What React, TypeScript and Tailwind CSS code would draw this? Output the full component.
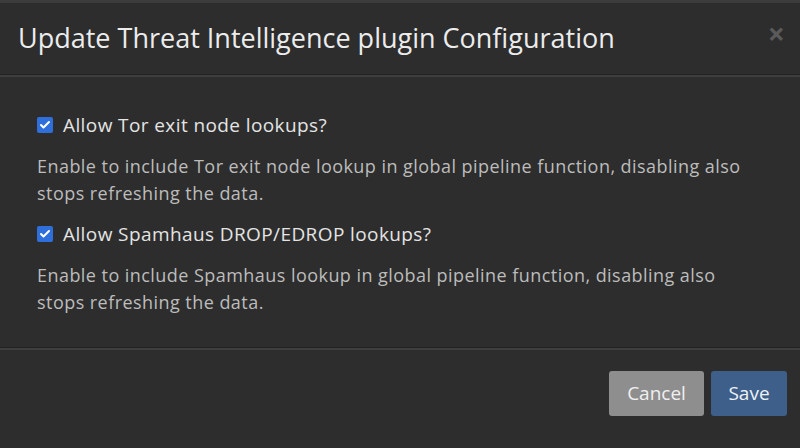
import {Check} from "lucide-react";

function Option({label, help}: {label: string, help: string}) {
    return (
        <div className="flex flex-col">
            <label className="flex items-center gap-[10px] text-[19px] leading-[24px] tracking-[0.4px] text-[#e4e4e4]">
                <span className="flex h-[16px] w-[16px] items-center justify-center rounded-[2px] bg-[#2f6fdc]">
                    <Check className="size-[12px] text-white" strokeWidth={4}/>
                </span>
                {label}
            </label>
            <p className="mt-[16px] text-[18px] leading-[27px] tracking-[0.45px] text-[#bcbcbc]">{help}</p>
        </div>
    )
}

export default function App() {
    return (
        <div className="flex h-[448px] w-[800px] flex-col bg-[#2d2d2d] font-['Open_Sans',sans-serif]">
            <div className="h-[3px] bg-[#3c3c3c]"/>
            <div className="flex h-[71px] items-center justify-between pl-[18px] pr-[15px]">
                <h1 className="text-[27px] text-[#ececec]">Update Threat Intelligence plugin Configuration</h1>
                <span className="mb-[10px] text-[30px] font-bold leading-none text-[#5a5a5a]">×</span>
            </div>
            <div className="h-[1px] bg-[#222]"/>
            <div className="h-[2px] bg-[#3e3e3e]"/>
            <div className="flex flex-1 flex-col gap-[15px] px-[37px] pt-[36px]">
                <Option label="Allow Tor exit node lookups?"
                        help="Enable to include Tor exit node lookup in global pipeline function, disabling also stops refreshing the data."/>
                <Option label="Allow Spamhaus DROP/EDROP lookups?"
                        help="Enable to include Spamhaus lookup in global pipeline function, disabling also stops refreshing the data."/>
            </div>
            <div className="h-[1px] bg-[#222]"/>
            <div className="h-[2px] bg-[#3e3e3e]"/>
            <div className="flex h-[98px] items-start justify-end gap-[7px] pr-[13px] pt-[21px]">
                <button className="h-[45px] w-[95px] rounded-[3px] bg-[#8e8e8e] text-[19px] text-[#f0f0f0]">Cancel</button>
                <button className="h-[45px] w-[76px] rounded-[3px] bg-[#3d5f8a] text-[19px] text-[#eef2f6]">Save</button>
            </div>
        </div>
    );
}
